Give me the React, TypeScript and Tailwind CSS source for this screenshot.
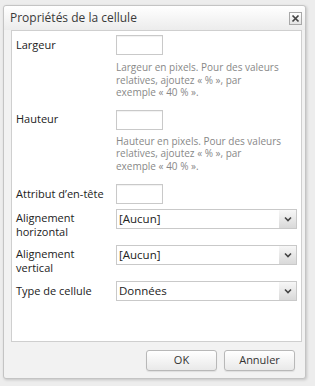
import React from "react";

const font = { fontFamily: "'Segoe UI', 'Open Sans', 'Liberation Sans', sans-serif" };

function TextBox() {
  return <div className="h-[20px] w-[47px] border border-[#c9c9c9] bg-white shadow-[inset_0_1px_1px_rgba(0,0,0,0.06)]" />;
}

function Select({ value }: { value: string }) {
  return (
    <div className="flex h-[20px] w-[181px] items-stretch border border-[#c9c9c9] bg-white">
      <span className="flex-1 pl-[2px] text-[11.5px] leading-[18px] text-[#222]">{value}</span>
      <span className="flex w-[17px] items-center justify-center bg-gradient-to-b from-[#f7f7f7] to-[#d9d9d9]">
        <svg width="8" height="6" viewBox="0 0 8 6" fill="none">
          <path d="M1 1.5 L4 4.5 L7 1.5" stroke="#444" strokeWidth="1.6" />
        </svg>
      </span>
    </div>
  );
}

function Help({ what }: { what: string }) {
  return (
    <p className="ml-[100px] whitespace-nowrap text-[10px] leading-[12.5px] text-[#888]">
      {what} en pixels. Pour des valeurs
      <br />
      relatives, ajoutez « % », par
      <br />
      exemple « 40 % ».
    </p>
  );
}

function Button({ label }: { label: string }) {
  return (
    <button className="h-[21px] w-[71px] rounded-[3px] border border-[#b8b8b8] bg-gradient-to-b from-white to-[#e9e9e9] text-[11px] text-[#333] shadow-[0_1px_1px_rgba(0,0,0,0.08)]">
      {label}
    </button>
  );
}

export default function App() {
  return (
    <div className="h-[386px] w-[315px] overflow-hidden bg-[#ededed] pl-[3px] pt-[5px]" style={font}>
      <div className="flex h-[374px] w-[303px] flex-col rounded-[3px] border border-[#c4c4c4] bg-[#f2f2f2] shadow-[1px_1px_3px_rgba(0,0,0,0.18)]">
        <div className="flex h-[24px] items-center justify-between rounded-t-[3px] bg-gradient-to-b from-white to-[#ececec] pl-[6px] pr-[3px]">
          <span className="text-[12px] text-[#3a3a3a]">Propriétés de la cellule</span>
          <span className="flex h-[13px] w-[13px] items-center justify-center border border-[#a8a8a8] bg-gradient-to-b from-white to-[#e4e4e4]">
            <svg width="9" height="9" viewBox="0 0 9 9">
              <path d="M1.5 1.5 L7.5 7.5 M7.5 1.5 L1.5 7.5" stroke="#444" strokeWidth="1.7" />
            </svg>
          </span>
        </div>

        <div className="ml-[7px] mr-[3px] flex h-[312px] flex-col border border-[#cfcfcf] bg-white pl-[4px] pt-[4px] text-[11px] text-[#222]">
          <div className="flex items-center">
            <span className="w-[100px]">Largeur</span>
            <TextBox />
          </div>
          <div className="mt-[6px]">
            <Help what="Largeur" />
          </div>

          <div className="mt-[11px] flex items-center">
            <span className="w-[100px]">Hauteur</span>
            <TextBox />
          </div>
          <div className="mt-[5px]">
            <Help what="Hauteur" />
          </div>

          <div className="mt-[12px] flex items-center">
            <span className="w-[100px]">Attribut d’en-tête</span>
            <TextBox />
          </div>

          <div className="mt-[5px] flex items-start">
            <span className="w-[100px] pt-[2px] leading-[14px]">Alignement<br />horizontal</span>
            <Select value="[Aucun]" />
          </div>

          <div className="mt-[6px] flex items-start">
            <span className="w-[100px] pt-[2px] leading-[14px]">Alignement<br />vertical</span>
            <Select value="[Aucun]" />
          </div>

          <div className="mt-[6px] flex items-center">
            <span className="w-[100px]">Type de cellule</span>
            <Select value="Données" />
          </div>
        </div>

        <div className="flex justify-end gap-[7px] pr-[10px] pt-[8px]">
          <Button label="OK" />
          <Button label="Annuler" />
        </div>
      </div>
    </div>
  );
}
